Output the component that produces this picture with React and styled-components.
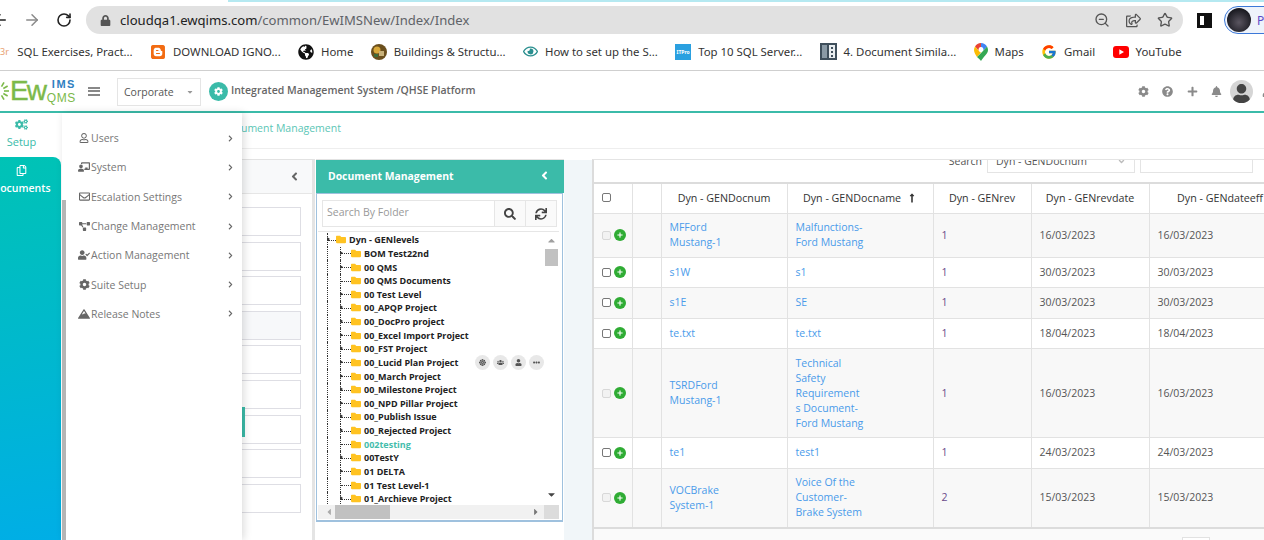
import styled, { createGlobalStyle } from "styled-components";
import { ArrowLeft, ArrowRight, RotateCw, ZoomOut, Star } from "lucide-react";
import {
  FaAngleDown,
  FaAngleLeft,
  FaBell,
  FaBlogger,
  FaCaretDown,
  FaCaretLeft,
  FaCaretRight,
  FaCaretUp,
  FaChalkboardTeacher,
  FaChevronRight,
  FaCog,
  FaCogs,
  FaDharmachakra,
  FaEllipsisH,
  FaFolder,
  FaGlobeAmericas,
  FaLock,
  FaLongArrowAltUp,
  FaMountain,
  FaPlus,
  FaProjectDiagram,
  FaQuestionCircle,
  FaRegCopy,
  FaRegEnvelope,
  FaRegEye,
  FaRegShareSquare,
  FaRegUser,
  FaSearch,
  FaSync,
  FaUser,
  FaUserCheck,
  FaUsers,
} from "react-icons/fa";
import { FcGoogle } from "react-icons/fc";

const GlobalStyle = createGlobalStyle`
  html, body {
    margin: 0;
    height: 540px;
    overflow: hidden;
    background: #fff;
  }
  body {
    font-family: "Open Sans", "Liberation Sans", sans-serif;
  }
  * {
    box-sizing: border-box;
  }
`;

const Page = styled.div`
  width: 1264px;
  height: 540px;
  overflow: hidden;
  display: flex;
  flex-direction: column;
`;

/* browser chrome */
const TabEdge = styled.div`
  height: 2px;
  flex: none;
  margin-left: 228px;
  background: #b5e9f1;
`;

const Toolbar = styled.div`
  height: 36px;
  flex: none;
  display: flex;
  align-items: center;
  margin-left: -16px;
  color: #333;
`;

const NavButton = styled.span`
  flex: none;
  width: 32px;
  display: flex;
  justify-content: center;
  color: ${(p) => p.$color || "#222"};
`;

const AddressBar = styled.div`
  flex: none;
  width: 1097px;
  height: 28px;
  margin-left: 6px;
  padding: 0 10px 0 14px;
  border-radius: 14px;
  background: #e1e1e1;
  display: flex;
  align-items: center;
  font-family: "Noto Sans", sans-serif;
  font-size: 13.1px;
  color: #5f6368;
  svg {
    flex: none;
  }
`;

const Host = styled.span`
  margin-left: 9px;
  color: #222;
`;

const AddressTools = styled.div`
  margin-left: auto;
  display: flex;
  align-items: center;
  gap: 16px;
  color: #555;
`;

const SidePanelIcon = styled.span`
  flex: none;
  width: 15px;
  height: 15px;
  margin-left: 14px;
  border: 3px solid #111;
  border-left-width: 3px;
  border-right-width: 8px;
  background: #fff;
`;

const ProfilePill = styled.div`
  flex: none;
  width: 60px;
  height: 28px;
  margin-left: 12px;
  padding-left: 2px;
  border: 1px solid #3c78d8;
  border-radius: 14px;
  background: #eef3fb;
  display: flex;
  align-items: center;
  gap: 6px;
  color: #5b4ac8;
  font-family: "Noto Sans", sans-serif;
  font-size: 12px;
`;

const ProfileAvatar = styled.span`
  flex: none;
  width: 24px;
  height: 24px;
  border-radius: 50%;
  background: radial-gradient(circle at 50% 60%, #5a5560, #1b1b22 70%);
`;

const Bookmarks = styled.div`
  height: 33px;
  flex: none;
  padding-bottom: 5px;
  display: flex;
  align-items: center;
  gap: 17.3px;
  border-bottom: 1px solid #cfcfcf;
  font-family: "Noto Sans", sans-serif;
  font-size: 11.4px;
  color: #333;
  white-space: nowrap;
`;

const Bookmark = styled.span`
  display: flex;
  align-items: center;
  gap: 7px;
`;

const BookmarkStub = styled.span`
  color: #e8a070;
  font-size: 9px;
  margin-right: -11px;
`;

const TinyBadge = styled.span`
  width: 16px;
  height: 16px;
  background: #2aa0e0;
  color: #fff;
  font-size: 5px;
  font-weight: 700;
  display: flex;
  align-items: center;
  justify-content: center;
`;

/* app header */
const AppHeader = styled.header`
  height: 42px;
  flex: none;
  display: flex;
  align-items: center;
  border-bottom: 2px solid #3bbba9;
`;

const Logo = styled.div`
  flex: none;
  width: 92px;
  margin-left: -12px;
  display: flex;
  align-items: center;
  font-family: "Liberation Sans", sans-serif;
`;

const LogoWord = styled.span`
  font-size: 28px;
  letter-spacing: -2px;
  color: #7cb94a;
  -webkit-text-stroke: 0.4px #7cb94a;
`;

const LogoStack = styled.span`
  display: flex;
  flex-direction: column;
  align-items: flex-end;
  width: 30px;
  margin-left: 1px;
`;

const LogoIms = styled.span`
  color: #2f7fc1;
  font-size: 11px;
  font-weight: 700;
  line-height: 13px;
  letter-spacing: 1.5px;
`;

const LogoQms = styled.span`
  color: #7cb94a;
  font-size: 12px;
  line-height: 14px;
  letter-spacing: 0.6px;
`;

const Burger = styled.span`
  width: 12px;
  height: 9px;
  margin: 0 17px 0 8px;
  border-top: 2px solid #888;
  border-bottom: 2px solid #888;
  position: relative;
  &::after {
    content: "";
    position: absolute;
    left: 0;
    right: 0;
    top: 1.5px;
    height: 2px;
    background: #888;
  }
`;

const CompanySelect = styled.div`
  width: 84px;
  height: 28px;
  margin-top: 2px;
  padding: 0 6px;
  border: 1px solid #e5e5e5;
  display: flex;
  align-items: center;
  justify-content: space-between;
  font-size: 10.5px;
  color: #555;
  svg {
    color: #999;
  }
`;

const PlatformBadge = styled.span`
  width: 19px;
  height: 19px;
  margin-left: 8px;
  border-radius: 50%;
  background: #3bbba9;
  color: #fff;
  display: flex;
  align-items: center;
  justify-content: center;
`;

const PlatformTitle = styled.span`
  margin: -2px 0 0 3px;
  font-size: 10.5px;
  font-weight: 600;
  color: #666;
`;

const HeaderTools = styled.div`
  margin-left: auto;
  margin-right: -9px;
  display: flex;
  align-items: center;
  gap: 13.4px;
  color: #8a8a8a;
`;

const HeaderAvatar = styled.span`
  width: 23px;
  height: 23px;
  border-radius: 50%;
  background: #d5d5d5;
  color: #444;
  overflow: hidden;
  display: flex;
  align-items: flex-end;
  justify-content: center;
  margin: 0 -4px 0 -6px;
`;

/* body */
const Body = styled.div`
  flex: 1;
  min-height: 0;
  display: flex;
  position: relative;
`;

const Sidebar = styled.nav`
  flex: none;
  width: 79px;
  margin-left: -18px;
  margin-right: 1px;
  display: flex;
  flex-direction: column;
  font-size: 11px;
`;

const SideItem = styled.div`
  height: ${(p) => (p.$active ? "auto" : "44px")};
  flex: ${(p) => (p.$active ? 1 : "none")};
  padding-top: ${(p) => (p.$active ? "8px" : "5px")};
  display: flex;
  flex-direction: column;
  align-items: center;
  gap: ${(p) => (p.$active ? "5px" : "3px")};
  color: ${(p) => (p.$active ? "#fff" : "#3bbba9")};
  font-weight: ${(p) => (p.$active ? 600 : 400)};
  font-size: ${(p) => (p.$active ? "10.5px" : "11px")};
  border-radius: ${(p) => (p.$active ? "0 8px 0 0" : "0")};
  background: ${(p) =>
    p.$active ? "linear-gradient(172deg, #00c3b5 0%, #00aee6 100%)" : "#fff"};
`;

const SetupMenu = styled.div`
  position: absolute;
  top: 0;
  bottom: 0;
  left: 62px;
  width: 180px;
  display: flex;
  background: #fff;
  box-shadow: 2px 0 8px rgba(0, 0, 0, 0.14);
  z-index: 2;
`;

const MenuScroll = styled.div`
  flex: none;
  width: 4px;
  margin-top: 87px;
  background: #b5b5b5;
`;

const MenuList = styled.ul`
  flex: 1;
  margin: 0;
  padding: 10.5px 8px 0 11px;
  list-style: none;
`;

const MenuRow = styled.li`
  height: 29.3px;
  display: flex;
  align-items: center;
  font-size: 10.5px;
  color: #777;
`;

const MenuIcon = styled.span`
  width: 14px;
  display: flex;
  justify-content: center;
  color: #666;
`;

const MenuChevron = styled.span`
  margin-left: auto;
  display: flex;
  color: #666;
`;

const Content = styled.main`
  flex: 1;
  min-width: 0;
  display: flex;
  flex-direction: column;
`;

const Breadcrumb = styled.div`
  height: 36px;
  flex: none;
  padding: 0 0 5px 160px;
  display: flex;
  align-items: center;
  border-bottom: 1px solid #eee;
  font-size: 10.5px;
  color: #5cc6b6;
`;

const Workspace = styled.div`
  flex: 1;
  min-height: 0;
  padding-top: 10px;
  display: flex;
`;

const FolderPanel = styled.section`
  flex: none;
  width: 253px;
  border-top: 1px solid #e2e2e2;
  border-right: 3px solid #e4e4e4;
  position: relative;
`;

const FolderHead = styled.div`
  height: 34px;
  padding-right: 11px;
  border-bottom: 1px solid #e6e6e6;
  background: #f8f9fa;
  display: flex;
  align-items: center;
  justify-content: flex-end;
  color: #666;
`;

const FolderList = styled.div`
  padding: 13px 11px 0 18px;
  display: flex;
  flex-direction: column;
  gap: 5.6px;
`;

const FolderSlot = styled.div`
  height: 29px;
  border: 1px solid #dedee4;
  background: ${(p) => (p.$shaded ? "#f7f8fa" : "#fff")};
`;

const ActiveMark = styled.span`
  position: absolute;
  left: 180px;
  top: 247px;
  width: 3px;
  height: 30px;
  background: #3bbba9;
`;

const TreePanel = styled.section`
  flex: none;
  width: 248px;
  margin-left: 1px;
  border-top: 1px solid #e2e2e2;
  background: #fff;
  display: flex;
  flex-direction: column;
`;

const TreeTitle = styled.div`
  height: 33px;
  flex: none;
  padding: 0 13px 2px 12px;
  background: #3bbba9;
  color: #fff;
  font-size: 10.4px;
  font-weight: 700;
  display: flex;
  align-items: center;
  justify-content: space-between;
`;

const TreeBox = styled.div`
  width: 247px;
  height: 329px;
  flex: none;
  padding: 6px 3px 0 1px;
  border: 1px solid #9fc1de;
  border-bottom-width: 2px;
  display: flex;
  flex-direction: column;
`;

const SearchGroup = styled.div`
  flex: none;
  height: 27px;
  margin: 0 2px 0 4px;
  border: 1px solid #e6e6e6;
  display: flex;
  align-items: stretch;
`;

const SearchInput = styled.span`
  flex: 1;
  padding: 0 0 3px 4px;
  display: flex;
  align-items: center;
  font-size: 10.5px;
  color: #999;
`;

const SearchButton = styled.span`
  flex: none;
  width: 31px;
  border-left: 1px solid #e6e6e6;
  background: #fafafa;
  color: #444;
  display: flex;
  align-items: center;
  justify-content: center;
`;

const TreeView = styled.div`
  flex: none;
  height: 274px;
  margin-top: 4px;
  border-top: 1px solid #e6e6e6;
  display: flex;
  overflow: hidden;
`;

const TreeRows = styled.div`
  flex: 1;
  min-width: 0;
  padding-left: 9px;
  margin-top: 1px;
`;

const Row = styled.div`
  height: 13.63px;
  display: flex;
  align-items: center;
  font-size: 9px;
  font-weight: 700;
  color: ${(p) => (p.$current ? "#45bdac" : "#222")};
  white-space: nowrap;
`;

const Guide = styled.span`
  flex: none;
  width: 13px;
  height: 100%;
  border-left: 1px dotted #333;
`;

const Connector = styled.span`
  flex: none;
  width: ${(p) => (p.$root ? "9px" : "11px")};
  height: 100%;
  position: relative;
  border-left: 1px dotted #333;
  &::after {
    content: "";
    position: absolute;
    left: 0;
    right: 0;
    top: 50%;
    border-top: 1px dotted #333;
  }
  &::before {
    content: "";
    display: ${(p) => (p.$kids ? "block" : "none")};
    position: absolute;
    left: -1px;
    top: 50%;
    margin-top: -2.5px;
    border: 2.5px solid transparent;
    border-left: 3px solid #333;
  }
`;

const FolderGlyph = styled(FaFolder)`
  flex: none;
  width: 10px;
  height: 11px;
  margin-right: 3px;
  color: #ffc322;
`;

const RowActions = styled.span`
  margin-left: auto;
  display: flex;
  gap: 3px;
`;

const RowAction = styled.span`
  width: 15px;
  height: 15px;
  border-radius: 50%;
  background: #e8e8e8;
  color: #555;
  display: flex;
  align-items: center;
  justify-content: center;
`;

const VScroll = styled.div`
  flex: none;
  width: 15px;
  background: #fff;
  display: flex;
  flex-direction: column;
  align-items: center;
  color: #a0a0a0;
`;

const VThumb = styled.span`
  width: 13px;
  height: 17px;
  margin-top: 3px;
  background: #c1c1c1;
`;

const VArrow = styled.span`
  height: 11px;
  display: flex;
  align-items: center;
  margin-top: ${(p) => (p.$down ? "auto" : "3px")};
  margin-bottom: ${(p) => (p.$down ? "5px" : "0")};
  color: ${(p) => (p.$down ? "#444" : "#a0a0a0")};
`;

const HScroll = styled.div`
  flex: none;
  height: 14px;
  background: #f1f1f1;
  display: flex;
  align-items: center;
  color: #777;
  padding-left: 6px;
`;

const HThumb = styled.span`
  width: 55px;
  height: 14px;
  margin: 0 141px 0 1px;
  background: #c1c1c1;
`;

const HCorner = styled.span`
  width: 15px;
  height: 14px;
  margin-left: auto;
  background: #dcdcdc;
`;

const Gutter = styled.div`
  flex: none;
  width: 28px;
  margin-top: 1px;
  background: #f1f6f9;
`;

const GridPanel = styled.section`
  flex: 1;
  min-width: 0;
  border-top: 1px solid #e4e4e4;
  border-left: 2px solid #dcdcdc;
  overflow: hidden;
`;

const GridSearch = styled.div`
  height: 24px;
  margin-top: -11px;
  padding-right: 11px;
  display: flex;
  align-items: stretch;
  justify-content: flex-end;
  gap: 5px;
  font-size: 10.5px;
  color: #555;
`;

const SearchLabel = styled.span`
  display: flex;
  align-items: center;
`;

const GridSelect = styled.span`
  width: 148px;
  padding: 0 8px;
  border: 1px solid #e4e4e4;
  display: flex;
  align-items: center;
  justify-content: space-between;
  svg {
    color: #bbb;
  }
`;

const GridInput = styled.span`
  width: 113px;
  border: 1px solid #e4e4e4;
`;

const Grid = styled.table`
  width: 697px;
  margin-top: 9px;
  table-layout: fixed;
  border-collapse: collapse;
  border-top: 2px solid #dcdcdc;
  border-bottom: 2px solid #dcdcdc;
  font-size: 10.5px;
  line-height: 15px;
`;

const Head = styled.th`
  height: 30px;
  padding: 0 6px;
  border: 1px solid #e2e2e2;
  border-top: 0;
  font-size: 10.7px;
  font-weight: 400;
  color: #333;
  text-align: center;
  white-space: nowrap;
  &:first-child {
    border-left: 0;
    text-align: left;
    padding-left: 8px;
  }
`;

const SortMark = styled(FaLongArrowAltUp)`
  margin-left: 6px;
  vertical-align: -1px;
`;

const GridRow = styled.tr`
  background: ${(p) => (p.$odd ? "#f8f8f8" : "#fff")};
`;

const Cell = styled.td`
  height: 30.5px;
  padding: 6.5px 8px;
  border: 1px solid #e2e2e2;
  white-space: pre-line;
  color: ${(p) => p.$color || "#555"};
  &:first-child {
    border-left: 0;
  }
`;

const Marks = styled.span`
  display: flex;
  align-items: center;
  gap: 3px;
`;

const Check = styled.span`
  flex: none;
  display: inline-block;
  width: 9px;
  height: 9px;
  border: 1px solid ${(p) => (p.$off ? "#d8d8d8" : "#777")};
  border-radius: 2px;
  background: ${(p) => (p.$off ? "#f2f2f2" : "#fff")};
`;

const AddDot = styled.span`
  flex: none;
  width: 12px;
  height: 12px;
  border-radius: 50%;
  background: #2fac34;
  color: #fff;
  display: flex;
  align-items: center;
  justify-content: center;
`;

const GridFooter = styled.div`
  height: 14px;
  padding: 8px 54px 0 0;
  background: #fafafa;
  display: flex;
  justify-content: flex-end;
`;

const PagerBox = styled.span`
  width: 28px;
  height: 20px;
  border: 1px solid #e2e2e2;
  background: #fff;
`;

function Sunburst() {
  const rays = Array.from({ length: 12 }, (_, i) => i * 30);
  return (
    <svg width="22" height="22" viewBox="0 0 22 22">
      {rays.map((a) => (
        <line
          key={a}
          x1="11"
          y1="6"
          x2="11"
          y2="1"
          stroke="#7cb94a"
          strokeWidth="1.6"
          transform={`rotate(${a} 11 11)`}
        />
      ))}
    </svg>
  );
}

function MapsPin() {
  return (
    <svg width="14" height="18" viewBox="0 0 14 18">
      <path d="M7 0a7 7 0 0 1 6 3.5L9 8a2.5 2.5 0 0 0-2-4V0z" fill="#4285f4" />
      <path d="M7 0v4a2.5 2.5 0 0 0-2 4L1 3.5A7 7 0 0 1 7 0z" fill="#ea4335" />
      <path d="M1 3.5 5 8a2.5 2.5 0 0 0 2 1.4L3 14C1.5 11.5 0 9.500 0 7c0-1.300.4-2.500 1-3.500z" fill="#fbbc04" />
      <path d="M13 3.500c.6 1 1 2.200 1 3.500 0 4-4.500 6.500-7 11-.8-1.500-2.600-2.800-4-4L9 8z" fill="#34a853" />
    </svg>
  );
}

function BuildingBadge() {
  return (
    <svg width="16" height="16" viewBox="0 0 16 16">
      <circle cx="8" cy="8" r="8" fill="#6b4f1d" />
      <circle cx="6" cy="6" r="3.500" fill="#d9a93a" />
      <rect x="8" y="7" width="5" height="5" fill="#c9b27a" />
      <rect x="3" y="10" width="4" height="3" fill="#3f6b3a" />
    </svg>
  );
}

function PanelsBadge() {
  return (
    <svg width="17" height="17" viewBox="0 0 17 17">
      <rect width="17" height="17" fill="#3f4f5c" />
      <rect x="2" y="2" width="5" height="13" fill="#8a9aa6" />
      <rect x="9" y="2" width="6" height="13" fill="#e8edf0" />
      <rect x="11" y="4" width="2" height="2" fill="#3f4f5c" />
      <rect x="11" y="8" width="2" height="2" fill="#3f4f5c" />
      <rect x="11" y="12" width="2" height="2" fill="#3f4f5c" />
    </svg>
  );
}

function TubeBadge() {
  return (
    <svg width="16" height="12" viewBox="0 0 16 12">
      <rect width="16" height="12" rx="3" fill="#f00" />
      <path d="M6.300 3.300v5.400L11 6z" fill="#fff" />
    </svg>
  );
}

const bookmarks = [
  { label: "SQL Exercises, Pract..." },
  { label: "DOWNLOAD IGNO...", icon: <FaBlogger size={16} color="#f26b12" /> },
  { label: "Home", icon: <FaGlobeAmericas size={16} color="#111" /> },
  { label: "Buildings & Structu...", icon: <BuildingBadge /> },
  { label: "How to set up the S...", icon: <FaRegEye size={15} color="#2a8f8f" /> },
  { label: "Top 10 SQL Server...", icon: <TinyBadge>ITPro</TinyBadge> },
  { label: "4. Document Simila...", icon: <PanelsBadge /> },
  { label: "Maps", icon: <MapsPin /> },
  { label: "Gmail", icon: <FcGoogle size={16} /> },
  { label: "YouTube", icon: <TubeBadge /> },
];

const setupItems = [
  { label: "Users", icon: <FaRegUser size={10} /> },
  { label: "System", icon: <FaChalkboardTeacher size={12} /> },
  { label: "Escalation Settings", icon: <FaRegEnvelope size={11} /> },
  { label: "Change Management", icon: <FaProjectDiagram size={11} /> },
  { label: "Action Management", icon: <FaUserCheck size={12} /> },
  { label: "Suite Setup", icon: <FaCog size={11} /> },
  { label: "Release Notes", icon: <FaMountain size={12} /> },
];

const treeItems = [
  { name: "BOM Test22nd", kids: true },
  { name: "00 QMS", kids: true },
  { name: "00 QMS Documents" },
  { name: "00 Test Level", kids: true },
  { name: "00_APQP Project", kids: true },
  { name: "00_DocPro project", kids: true },
  { name: "00_Excel Import Project", kids: true },
  { name: "00_FST Project", kids: true },
  { name: "00_Lucid Plan Project", kids: true, actions: true },
  { name: "00_March Project", kids: true },
  { name: "00_Milestone Project", kids: true },
  { name: "00_NPD Pillar Project", kids: true },
  { name: "00_Publish Issue", kids: true },
  { name: "00_Rejected Project", kids: true },
  { name: "002testing", current: true },
  { name: "00TestY", kids: true },
  { name: "01 DELTA", kids: true },
  { name: "01 Test Level-1" },
  { name: "01_Archieve Project", kids: true },
];

const documents = [
  { num: "MFFord\nMustang-1", name: "Malfunctions-\nFord Mustang", rev: "1", revDate: "16/03/2023", effDate: "16/03/2023", locked: true },
  { num: "s1W", name: "s1", rev: "1", revDate: "30/03/2023", effDate: "30/03/2023" },
  { num: "s1E", name: "SE", rev: "1", revDate: "30/03/2023", effDate: "30/03/2023" },
  { num: "te.txt", name: "te.txt", rev: "1", revDate: "18/04/2023", effDate: "18/04/2023" },
  { num: "TSRDFord\nMustang-1", name: "Technical\nSafety\nRequirement\ns Document-\nFord Mustang", rev: "1", revDate: "16/03/2023", effDate: "16/03/2023", locked: true },
  { num: "te1", name: "test1", rev: "1", revDate: "24/03/2023", effDate: "24/03/2023" },
  { num: "VOCBrake\nSystem-1", name: "Voice Of the\nCustomer-\nBrake System", rev: "2", revDate: "15/03/2023", effDate: "15/03/2023", locked: true },
];

const columnWidths = [38, 29, 126, 146, 98, 118, 142];

function App() {
  return (
    <Page>
      <GlobalStyle />
      <TabEdge />
      <Toolbar>
        <NavButton><ArrowLeft size={18} /></NavButton>
        <NavButton $color="#8a8a8a"><ArrowRight size={18} /></NavButton>
        <NavButton><RotateCw size={16} strokeWidth={2.4} /></NavButton>
        <AddressBar>
          <FaLock size={11} color="#555" />
          <Host>cloudqa1.ewqims.com</Host>/common/EwIMSNew/Index/Index
          <AddressTools>
            <ZoomOut size={16} />
            <FaRegShareSquare size={15} />
            <Star size={16} />
          </AddressTools>
        </AddressBar>
        <SidePanelIcon />
        <ProfilePill>
          <ProfileAvatar />
          Pa
        </ProfilePill>
      </Toolbar>
      <Bookmarks>
        <Bookmark>
          <BookmarkStub>3r</BookmarkStub>
        </Bookmark>
        {bookmarks.map((b) => (
          <Bookmark key={b.label}>
            {b.icon}
            {b.label}
          </Bookmark>
        ))}
      </Bookmarks>
      <AppHeader>
        <Logo>
          <Sunburst />
          <LogoWord>Ew</LogoWord>
          <LogoStack>
            <LogoIms>IMS</LogoIms>
            <LogoQms>QMS</LogoQms>
          </LogoStack>
        </Logo>
        <Burger />
        <CompanySelect>
          Corporate
          <FaCaretDown size={8} />
        </CompanySelect>
        <PlatformBadge><FaCog size={9} /></PlatformBadge>
        <PlatformTitle>Integrated Management System /QHSE Platform</PlatformTitle>
        <HeaderTools>
          <FaCog size={11} />
          <FaQuestionCircle size={11} />
          <FaPlus size={11} />
          <FaBell size={11} />
          <HeaderAvatar><FaUser size={19} /></HeaderAvatar>
          <FaUser size={11} />
        </HeaderTools>
      </AppHeader>
      <Body>
        <Sidebar>
          <SideItem>
            <FaCogs size={13} />
            Setup
          </SideItem>
          <SideItem $active>
            <FaRegCopy size={11} />
            Documents
          </SideItem>
        </Sidebar>
        <SetupMenu>
          <MenuScroll />
          <MenuList>
            {setupItems.map((item) => (
              <MenuRow key={item.label}>
                <MenuIcon>{item.icon}</MenuIcon>
                {item.label}
                <MenuChevron><FaChevronRight size={7} /></MenuChevron>
              </MenuRow>
            ))}
          </MenuList>
        </SetupMenu>
        <Content>
          <Breadcrumb>Document Management</Breadcrumb>
          <Workspace>
            <FolderPanel>
              <FolderHead><FaAngleLeft size={13} /></FolderHead>
              <FolderList>
                {Array.from({ length: 9 }, (_, i) => (
                  <FolderSlot key={i} $shaded={i === 3} />
                ))}
              </FolderList>
              <ActiveMark />
            </FolderPanel>
            <TreePanel>
              <TreeTitle>
                Document Management
                <FaAngleLeft size={13} />
              </TreeTitle>
              <TreeBox>
                <SearchGroup>
                  <SearchInput>Search By Folder</SearchInput>
                  <SearchButton><FaSearch size={12} /></SearchButton>
                  <SearchButton><FaSync size={12} /></SearchButton>
                </SearchGroup>
                <TreeView>
                  <TreeRows>
                    <Row>
                      <Connector $root $kids />
                      <FolderGlyph />
                      Dyn - GENlevels
                    </Row>
                    {treeItems.map((item) => (
                      <Row key={item.name} $current={item.current}>
                        <Guide />
                        <Connector $kids={item.kids} />
                        <FolderGlyph />
                        {item.name}
                        {item.actions && (
                          <RowActions>
                            <RowAction><FaDharmachakra size={7} /></RowAction>
                            <RowAction><FaUsers size={7} /></RowAction>
                            <RowAction><FaUser size={7} /></RowAction>
                            <RowAction><FaEllipsisH size={7} /></RowAction>
                          </RowActions>
                        )}
                      </Row>
                    ))}
                  </TreeRows>
                  <VScroll>
                    <VArrow><FaCaretUp size={11} /></VArrow>
                    <VThumb />
                    <VArrow $down><FaCaretDown size={11} /></VArrow>
                  </VScroll>
                </TreeView>
                <HScroll>
                  <FaCaretLeft size={10} color="#aaa" />
                  <HThumb />
                  <FaCaretRight size={10} />
                  <HCorner />
                </HScroll>
              </TreeBox>
            </TreePanel>
            <Gutter />
            <GridPanel>
              <GridSearch>
                <SearchLabel>Search</SearchLabel>
                <GridSelect>
                  Dyn - GENDocnum
                  <FaAngleDown size={9} />
                </GridSelect>
                <GridInput />
              </GridSearch>
              <Grid>
                <colgroup>
                  {columnWidths.map((w, i) => (
                    <col key={i} width={w} />
                  ))}
                </colgroup>
                <thead>
                  <tr>
                    <Head><Check /></Head>
                    <Head />
                    <Head>Dyn - GENDocnum</Head>
                    <Head>
                      Dyn - GENDocname
                      <SortMark size={10} />
                    </Head>
                    <Head>Dyn - GENrev</Head>
                    <Head>Dyn - GENrevdate</Head>
                    <Head>Dyn - GENdateeff</Head>
                  </tr>
                </thead>
                <tbody>
                  {documents.map((doc, i) => (
                    <GridRow key={doc.num} $odd={i % 2 === 0}>
                      <Cell>
                        <Marks>
                          <Check $off={doc.locked} />
                          <AddDot><FaPlus size={6} /></AddDot>
                        </Marks>
                      </Cell>
                      <Cell />
                      <Cell $color="#4a9bea">{doc.num}</Cell>
                      <Cell $color="#4a9bea">{doc.name}</Cell>
                      <Cell $color="#6a4a8a">{doc.rev}</Cell>
                      <Cell>{doc.revDate}</Cell>
                      <Cell>{doc.effDate}</Cell>
                    </GridRow>
                  ))}
                </tbody>
              </Grid>
              <GridFooter><PagerBox /></GridFooter>
            </GridPanel>
          </Workspace>
        </Content>
      </Body>
    </Page>
  );
}

export default App;
